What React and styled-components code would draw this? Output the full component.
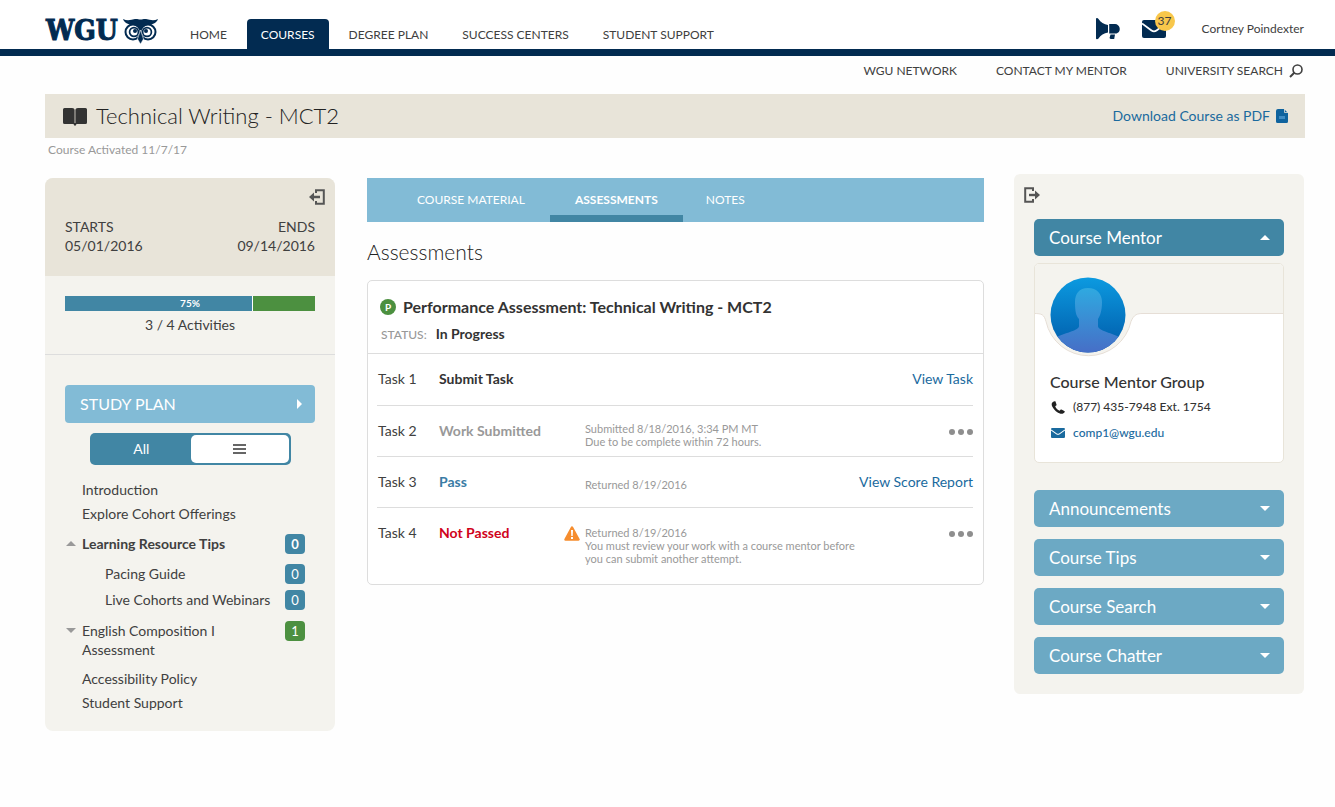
import React, { useState } from 'react';
import styled, { createGlobalStyle } from 'styled-components';

const c = {
  navy: '#022b51',
  ink: '#404040',
  link: '#1a6a9e',
  teal: '#4186a4',
  sky: '#82bbd6',
  blue: '#6ca9c4',
  tan: '#e8e4d9',
  cream: '#f4f3ee',
  green: '#4c9040',
  grey: '#999999',
  line: '#dddddd',
};

const Global = createGlobalStyle`
  * { box-sizing: border-box; }
  body { margin: 0; background: #fefefe; color: ${c.ink}; font: 14px/20px Lato, 'Liberation Sans', sans-serif; }
  a { color: inherit; text-decoration: none; }
  button { font: inherit; color: inherit; border: 0; padding: 0; background: none; cursor: pointer; }
  h1, h2, h3, p, ul { margin: 0; padding: 0; font-weight: inherit; }
  ul { list-style: none; }
  svg { display: block; flex: none; }
`;

const Header = styled.header`
  display: flex;
  align-items: flex-end;
  height: 56px;
  padding: 0 31px 0 46px;
  border-bottom: 7px solid ${c.navy};
  background: #fff;
`;
const Logo = styled.a`
  display: flex;
  align-items: center;
  justify-content: space-between;
  width: 112px;
  height: 37px;
  margin-right: 18px;
  color: ${c.navy};
  font: bold 28px/37px 'DejaVu Serif Condensed', 'DejaVu Serif', serif;
  -webkit-text-stroke: 1px ${c.navy};
`;
const Nav = styled.nav`
  display: flex;
  gap: 6px;
`;
const NavLink = styled.a`
  height: 30px;
  padding: 0 14px;
  border-radius: 4px 4px 0 0;
  font-size: 12px;
  line-height: 31px;
  white-space: nowrap;
  color: ${(p) => (p.$active ? '#fff' : c.ink)};
  background: ${(p) => (p.$active ? c.navy : 'transparent')};
`;
const HeaderTools = styled.div`
  display: flex;
  align-items: center;
  height: 40px;
  margin-left: auto;
  color: ${c.navy};
`;
const MailButton = styled.button`
  position: relative;
  margin: 0 36px 0 22px;
`;
const MailCount = styled.span`
  position: absolute;
  top: -9px;
  right: -9px;
  width: 20px;
  height: 20px;
  border-radius: 10px;
  background: #f8c74b;
  color: ${c.ink};
  font-size: 12px;
  line-height: 20px;
`;
const UserName = styled.a`
  color: ${c.ink};
  font-size: 12px;
`;
const SubNav = styled.nav`
  display: flex;
  justify-content: flex-end;
  gap: 39px;
  height: 38px;
  padding: 5px 32px 0;
  font-size: 12px;
  white-space: nowrap;
`;
const SubLink = styled.a`
  display: flex;
  align-items: center;
  gap: 6px;
  height: 20px;
`;

const Page = styled.main`
  padding: 0 30px 40px 45px;
`;
const TitleBar = styled.div`
  display: flex;
  align-items: center;
  height: 44px;
  padding: 0 17px 0 18px;
  background: ${c.tan};
`;
const Title = styled.h1`
  margin-left: 9px;
  font-size: 22px;
  font-weight: 300;
  color: #222;
`;
const Download = styled.a`
  display: flex;
  align-items: center;
  gap: 6px;
  margin-left: auto;
  color: ${c.link};
`;
const Activated = styled.p`
  height: 36px;
  padding: 2px 3px;
  font-size: 12px;
  color: ${c.grey};
`;
const Columns = styled.div`
  display: grid;
  grid-template-columns: 290px minmax(0, 1fr) 290px;
  align-items: start;
  gap: 30px;
  padding-right: 1px;
`;

const SidePanel = styled.aside`
  margin-top: 4px;
  border-radius: 8px;
  background: ${c.cream};
  overflow: hidden;
`;
const Dates = styled.div`
  height: 98px;
  padding: 11px 20px 0;
  background: ${c.tan};
`;
const CollapseLeft = styled.button`
  display: block;
  margin: 0 -10px 0 auto;
`;
const DateRow = styled.div`
  display: flex;
  justify-content: space-between;
  margin-top: 12px;
  line-height: 19px;
`;
const DateBlock = styled.div`
  text-align: ${(p) => p.$align};
`;
const Progress = styled.div`
  height: 79px;
  padding: 20px 20px 0;
  border-bottom: 1px solid ${c.line};
  text-align: center;
`;
const Bar = styled.div`
  display: grid;
  height: 15px;
  margin-bottom: 4px;
  background: ${c.green};
`;
const BarFill = styled.div`
  grid-area: 1 / 1;
  border-right: 1px solid #fff;
  background: ${c.teal};
`;
const BarLabel = styled.span`
  grid-area: 1 / 1;
  font-size: 10px;
  font-weight: bold;
  line-height: 15px;
  color: #fff;
`;
const Plan = styled.div`
  padding: 30px 20px 16px;
`;
const StudyPlan = styled.button`
  display: flex;
  align-items: center;
  justify-content: space-between;
  width: 100%;
  height: 38px;
  padding: 0 13px 0 15px;
  border-radius: 4px;
  background: ${c.sky};
  color: #fff;
  font-size: 16px;
`;
const Toggle = styled.div`
  display: flex;
  height: 32px;
  margin: 10px 24px 13px 25px;
  padding: 2px;
  border-radius: 5px;
  background: ${c.teal};
`;
const ToggleOption = styled.button`
  display: flex;
  flex: 1;
  align-items: center;
  justify-content: center;
  border-radius: 5px;
  color: #fff;
  background: ${(p) => (p.$on ? '#fff' : 'transparent')};
`;
const PlanRow = styled.li`
  display: flex;
  align-items: flex-start;
  min-height: 24px;
  padding: 2px 10px 2px ${(p) => (p.$nested ? 40 : 0)}px;
  margin-top: ${(p) => p.$space || 0}px;
  font-weight: ${(p) => (p.$bold ? 'bold' : 'normal')};
  line-height: 19px;
`;
const Arrow = styled.span`
  width: 17px;
  padding: 7px 1px;
  color: #999;
`;
const PlanLink = styled.a`
  flex: 1;
  max-width: 170px;
`;
const Count = styled.span`
  width: 20px;
  height: 20px;
  margin-left: auto;
  border-radius: 4px;
  background: ${(p) => (p.$green ? c.green : c.teal)};
  color: #fff;
  font-size: 13px;
  line-height: 20px;
  text-align: center;
`;

const Content = styled.section`
  margin-top: 4px;
  padding-left: 2px;
`;
const Tabs = styled.nav`
  display: flex;
  height: 44px;
  padding-left: 25px;
  background: ${c.sky};
`;
const Tab = styled.a`
  padding: 0 ${(p) => (p.$last ? 23 : 25)}px;
  border-bottom: ${(p) => (p.$active ? `7px solid ${c.teal}` : '0')};
  color: #fff;
  font-size: 12px;
  font-weight: ${(p) => (p.$active ? 'bold' : 'normal')};
  line-height: 44px;
`;
const Heading = styled.h2`
  margin: 16px 0 14px;
  font-size: 21px;
  font-weight: 300;
  line-height: 28px;
  color: #222;
`;
const Card = styled.article`
  padding-bottom: 12px;
  border: 1px solid ${c.line};
  border-radius: 5px;
  background: #fff;
`;
const CardHead = styled.header`
  height: 73px;
  padding: 15px 12px 0;
  border-bottom: 1px solid ${c.line};
`;
const CardTitle = styled.h3`
  display: flex;
  align-items: center;
  gap: 7px;
  font-size: 16px;
  font-weight: 700;
  line-height: 22px;
  color: #333;
`;
const Mark = styled.span`
  width: 16px;
  height: 16px;
  border-radius: 8px;
  background: ${c.green};
  color: #fff;
  font-size: 10px;
  font-weight: bold;
  line-height: 16px;
  text-align: center;
`;
const Status = styled.p`
  display: flex;
  align-items: baseline;
  gap: 9px;
  margin-top: 6px;
  padding-left: 1px;
  font-weight: bold;
  color: #333;
`;
const StatusLabel = styled.span`
  font-size: 12px;
  font-weight: 500;
  color: ${c.grey};
`;
const Tasks = styled.table`
  width: calc(100% - 19px);
  margin: 0 10px 0 9px;
  border-collapse: collapse;
`;
const TaskRow = styled.tr`
  height: 51px;
  &:not(:last-child) { border-bottom: 1px solid ${c.line}; }
`;
const Cell = styled.td`
  padding: 15px 0 0 ${(p) => (p.$first ? 1 : 0)}px;
  width: ${(p) => p.$width || 'auto'};
  vertical-align: top;
  text-align: ${(p) => p.$align || 'left'};
  white-space: nowrap;
  font-weight: ${(p) => (p.$bold ? 'bold' : 'normal')};
  color: ${(p) => p.$color || c.ink};
  > svg, > button { display: inline-block; vertical-align: middle; }
`;
const NoteCell = styled.td`
  padding: ${(p) => p.$top}px 0 7px;
  vertical-align: top;
  font-size: 11px;
  line-height: 13px;
  color: ${c.grey};
`;
const Note = styled.p`
  max-width: 280px;
`;

const RightPanel = styled.aside`
  padding: 13px 20px 20px;
  border-radius: 6px;
  background: ${c.cream};
`;
const CollapseRight = styled.button`
  display: block;
  margin: 0 0 16px -10px;
`;
const Fold = styled.button`
  display: flex;
  align-items: center;
  justify-content: space-between;
  width: 100%;
  height: 37px;
  padding: 0 14px 0 15px;
  margin-bottom: ${(p) => (p.$open ? 7 : 0)}px;
  border-radius: 5px;
  background: ${(p) => (p.$open ? c.teal : c.blue)};
  color: #fff;
  font-size: 17px;
`;
const FoldList = styled.div`
  display: grid;
  gap: 12px;
`;
const Mentor = styled.div`
  height: 200px;
  margin-bottom: 27px;
  border: 1px solid ${c.tan};
  border-radius: 5px;
  background: #fff;
  overflow: hidden;
  color: #333;
`;
const MentorName = styled.h3`
  padding: 6px 15px 1px;
  font-size: 16px;
  font-weight: 500;
  line-height: 22px;
`;
const Contact = styled.a`
  display: flex;
  align-items: center;
  gap: 8px;
  height: 26px;
  padding-left: 16px;
  font-size: 12px;
  font-weight: 500;
  color: ${(p) => (p.$link ? c.link : '#333')};
`;

const Owl = () => (
  <svg width="35" height="26" viewBox="0 0 35 26">
    <path fill={c.navy} d="M0 1c4 2 8 1 12 0 2-.4 3.500 .5 5.500 .5S21 .6 23 1c4 1 8 2 12 0-1.500 4-5 5.500-9 5.500-4 0-6 2-8.500 5C15 8.500 13 6.500 9 6.500S1.500 5 0 1z" />
    <path fill={c.navy} d="M9 4h17l-4 6-1 9-3.500 7-3.500-7-1-9z" />
    <g fill="#fff" stroke={c.navy} strokeWidth="2">
      <circle cx="10" cy="14" r="7.500" />
      <circle cx="25" cy="14" r="7.500" />
    </g>
    <g fill="#fff" stroke={c.navy} strokeWidth="1.700">
      <circle cx="11" cy="14" r="4.400" />
      <circle cx="24" cy="14" r="4.400" />
    </g>
    <path fill={c.navy} d="M8 2h19l-3 5c-3 0-5 2-6.500 5C16 9 14 7 11 7z" />
    <circle cx="12" cy="13" r="2" fill={c.navy} />
    <circle cx="23" cy="13" r="2" fill={c.navy} />
    <path fill={c.navy} stroke="#fff" strokeWidth=".6" d="M17.500 12l3 9-3 5-3-5z" />
  </svg>
);
const Megaphone = () => (
  <svg width="24" height="22" viewBox="0 0 24 22" fill={c.navy}>
    <path d="M0 .8C0-.2 1.800-.2 2.500 1 4.500 4 8 6.500 12 7v7.500C8 15 4.500 17.500 2.500 20.500c-.7 1-2.500 1-2.500 0z" />
    <path d="M13 6h6c2.500 0 4 2 4.500 3.500.8 3-.5 5-3 6H13zM14.500 16.500h4.500l-.8 4.500h-3.400c-1 0-1.500-1-1-2z" />
    <path d="M12 6v10h1.200V6z" fill="#fff" />
  </svg>
);
const Envelope = ({ width, height, fill }) => (
  <svg width={width} height={height} viewBox="0 0 24 18" preserveAspectRatio="none">
    <rect width="24" height="18" rx="2" fill={fill} />
    <path d="M0 3.500l9.500 7c1.700 1.200 3.300 1.200 5 0l9.500-7" fill="none" stroke="#fff" strokeWidth="1.800" />
  </svg>
);
const Magnifier = () => (
  <svg width="14" height="14" viewBox="0 0 14 14" fill="none" stroke={c.ink}>
    <circle cx="8.500" cy="5.500" r="4.500" strokeWidth="1.600" />
    <path d="M5.500 8.500L1 13" strokeWidth="2" />
  </svg>
);
const Book = () => (
  <svg width="24" height="19" viewBox="0 0 24 19" fill="#333">
    <path d="M1.500 1H9c1.500 0 2.600.7 2.600 2v15c-.6-.8-1.400-1-2.600-1H1.500A1.500 1.500 0 0 1 0 15.500v-13A1.500 1.500 0 0 1 1.500 1zM22.500 1H15c-1.500 0-2.600.7-2.600 2v15c.6-.8 1.400-1 2.600-1h7.500a1.500 1.500 0 0 0 1.500-1.500v-13A1.500 1.500 0 0 0 22.500 1z" />
    <path d="M11 16h2v2.500h-2z" />
  </svg>
);
const PdfFile = () => (
  <svg width="12" height="14" viewBox="0 0 12 14">
    <path d="M2 0h6l4 4v8.500a1.500 1.500 0 0 1-1.500 1.500h-9A1.500 1.500 0 0 1 0 12.500V2a2 2 0 0 1 2-2z" fill="#0f639e" />
    <path d="M8.500 0v3.500H12" fill="none" stroke={c.tan} strokeWidth=".8" />
    <path d="M3 7h6v3H3z" fill="#3f8cc4" />
  </svg>
);
const Exit = ({ left }) => (
  <svg width="16" height="16" viewBox="0 0 16 16" fill="none" stroke="#555">
    {left ? (
      <>
        <path d="M7 4V1.200h7.800v13.600H7V12" strokeWidth="2" />
        <path d="M11 8H4" strokeWidth="2.400" />
        <path d="M0 8l5-4.500v9z" fill="#555" stroke="none" />
      </>
    ) : (
      <>
        <path d="M9 4V1.200H1.200v13.600H9V12" strokeWidth="2" />
        <path d="M5 8h7" strokeWidth="2.400" />
        <path d="M16 8l-5-4.500v9z" fill="#555" stroke="none" />
      </>
    )}
  </svg>
);
const Triangle = ({ dir, width = 10, height = 5 }) => {
  const d = { up: 'M0 10L5 0l5 10z', down: 'M0 0h10L5 10z', right: 'M0 0l10 5-10 5z' }[dir];
  return (
    <svg width={width} height={height} viewBox="0 0 10 10" preserveAspectRatio="none" fill="currentColor">
      <path d={d} />
    </svg>
  );
};
const Lines = () => (
  <svg width="13" height="10" viewBox="0 0 13 10" fill="#666">
    <path d="M0 0h13v2H0zM0 4h13v2H0zM0 8h13v2H0z" />
  </svg>
);
const Warning = () => (
  <svg width="16" height="15" viewBox="0 0 16 15">
    <path d="M8 1.500L14.500 13.500h-13z" fill="#f68d2e" stroke="#f68d2e" strokeWidth="2.500" strokeLinejoin="round" />
    <path d="M7 4h2l-.3 6H7.300zM7 11h2v2H7z" fill="#fff" />
  </svg>
);
const Dots = () => (
  <svg width="24" height="6" viewBox="0 0 24 6" fill="#8e8e8e">
    <circle cx="3" cy="3" r="3" />
    <circle cx="12" cy="3" r="3" />
    <circle cx="21" cy="3" r="3" />
  </svg>
);
const Phone = () => (
  <svg width="14" height="13" viewBox="0 0 14 13" fill="#222">
    <path d="M3.500 .3c-3 1-3.500 3-2 5.700 1.800 3.200 4.500 5.800 8 6.700 2 .4 3.500-.4 4.200-1.700.2-.4 0-.8-.4-1L10.500 8.600c-.4-.2-.8-.1-1 .2l-.8 1C6.500 8.800 5 7.300 4.200 5.300l1-.7c.4-.3.4-.6.300-1L4.500.6C4.300.3 4 .1 3.500.3z" />
  </svg>
);
const Portrait = () => (
  <svg width="248" height="101" viewBox="0 0 248 101">
    <defs>
      <linearGradient id="disc" x1="0" y1="0" x2="0" y2="1">
        <stop offset="0" stopColor="#0c9ae0" />
        <stop offset="1" stopColor="#0059a8" />
      </linearGradient>
      <linearGradient id="person" x1="0" y1="0" x2="0" y2="1">
        <stop offset="0" stopColor="#2fa9e0" />
        <stop offset="1" stopColor="#476dc6" />
      </linearGradient>
      <clipPath id="round"><circle cx="53" cy="51" r="37.500" /></clipPath>
    </defs>
    <path d="M-1-1h250v50.500H108c-6 0-9 1-12 8a43.500 43.500 0 0 1-85 0c-2-7-4-8-12-8z" fill={c.cream} stroke="#e6ded6" />
    <circle cx="53" cy="51" r="37.500" fill="url(#disc)" />
    <path clipPath="url(#round)" fill="url(#person)" d="M53 24c9 0 14 6 14 14 0 9-2 14-4 17v7c0 5 15 7 23 12v16H20V74c8-5 24-7 24-12v-7c-3-3-4-8-4-17 0-8 4-14 13-14z" />
  </svg>
);

const navItems = ['HOME', 'COURSES', 'DEGREE PLAN', 'SUCCESS CENTERS', 'STUDENT SUPPORT'];
const tasks = [
  { name: 'Task 1', status: 'Submit Task', color: '#333333', link: 'View Task' },
  { name: 'Task 2', status: 'Work Submitted', color: c.grey, notes: ['Submitted 8/18/2016, 3:34 PM MT', 'Due to be complete within 72 hours.'] },
  { name: 'Task 3', status: 'Pass', color: '#3a7ca5', notes: ['Returned 8/19/2016'], noteTop: 21, link: 'View Score Report' },
  { name: 'Task 4', status: 'Not Passed', color: '#d0021b', warn: true, noteTop: 18, notes: ['Returned 8/19/2016', 'You must review your work with a course mentor before you can submit another attempt.'] },
];
const folds = ['Announcements', 'Course Tips', 'Course Search', 'Course Chatter'];

export default function App() {
  const [view, setView] = useState('list');
  return (
    <>
      <Global />
      <Header>
        <Logo href="#">WGU<Owl /></Logo>
        <Nav>
          {navItems.map((n) => (
            <NavLink key={n} href="#" $active={n === 'COURSES'}>{n}</NavLink>
          ))}
        </Nav>
        <HeaderTools>
          <button aria-label="Announcements"><Megaphone /></button>
          <MailButton aria-label="Messages">
            <Envelope width={24} height={18} fill={c.navy} />
            <MailCount>37</MailCount>
          </MailButton>
          <UserName href="#">Cortney Poindexter</UserName>
        </HeaderTools>
      </Header>
      <SubNav>
        <SubLink href="#">WGU NETWORK</SubLink>
        <SubLink href="#">CONTACT MY MENTOR</SubLink>
        <SubLink href="#">UNIVERSITY SEARCH <Magnifier /></SubLink>
      </SubNav>
      <Page>
        <TitleBar>
          <Book />
          <Title>Technical Writing - MCT2</Title>
          <Download href="#">Download Course as PDF <PdfFile /></Download>
        </TitleBar>
        <Activated>Course Activated 11/7/17</Activated>
        <Columns>
          <SidePanel>
            <Dates>
              <CollapseLeft aria-label="Collapse left panel"><Exit left /></CollapseLeft>
              <DateRow>
                <DateBlock $align="left">STARTS<br />05/01/2016</DateBlock>
                <DateBlock $align="right">ENDS<br />09/14/2016</DateBlock>
              </DateRow>
            </Dates>
            <Progress>
              <Bar>
                <BarFill style={{ width: '75%' }} />
                <BarLabel>75%</BarLabel>
              </Bar>
              3 / 4 Activities
            </Progress>
            <Plan>
              <StudyPlan>STUDY PLAN <Triangle dir="right" width={5} height={10} /></StudyPlan>
              <Toggle>
                <ToggleOption $on={view === 'all'} onClick={() => setView('all')}>All</ToggleOption>
                <ToggleOption aria-label="List" $on={view === 'list'} onClick={() => setView('list')}><Lines /></ToggleOption>
              </Toggle>
              <ul>
                <PlanRow><Arrow /><PlanLink href="#">Introduction</PlanLink></PlanRow>
                <PlanRow><Arrow /><PlanLink href="#">Explore Cohort Offerings</PlanLink></PlanRow>
                <PlanRow $bold $space={6}><Arrow><Triangle dir="up" /></Arrow><PlanLink href="#">Learning Resource Tips</PlanLink><Count>0</Count></PlanRow>
                <PlanRow $nested $space={6}><PlanLink href="#">Pacing Guide</PlanLink><Count>0</Count></PlanRow>
                <PlanRow $nested $space={2}><PlanLink href="#">Live Cohorts and Webinars</PlanLink><Count>0</Count></PlanRow>
                <PlanRow $space={7}><Arrow><Triangle dir="down" /></Arrow><PlanLink href="#">English Composition I<br />Assessment</PlanLink><Count $green>1</Count></PlanRow>
                <PlanRow $space={6}><Arrow /><PlanLink href="#">Accessibility Policy</PlanLink></PlanRow>
                <PlanRow><Arrow /><PlanLink href="#">Student Support</PlanLink></PlanRow>
              </ul>
            </Plan>
          </SidePanel>

          <Content>
            <Tabs>
              <Tab href="#">COURSE MATERIAL</Tab>
              <Tab href="#" $active>ASSESSMENTS</Tab>
              <Tab href="#" $last>NOTES</Tab>
            </Tabs>
            <Heading>Assessments</Heading>
            <Card>
              <CardHead>
                <CardTitle><Mark>P</Mark>Performance Assessment: Technical Writing - MCT2</CardTitle>
                <Status><StatusLabel>STATUS:</StatusLabel>In Progress</Status>
              </CardHead>
              <Tasks>
                <tbody>
                  {tasks.map((t) => (
                    <TaskRow key={t.name}>
                      <Cell $first $width="62px">{t.name}</Cell>
                      <Cell $bold $width="125px" $color={t.color}>{t.status}</Cell>
                      <Cell $width="21px">{t.warn && <Warning />}</Cell>
                      <NoteCell $top={t.noteTop || 16}>
                        {t.notes?.map((n) => <Note key={n}>{n}</Note>)}
                      </NoteCell>
                      <Cell $align="right" $color={c.link}>
                        {t.link ? <a href="#">{t.link}</a> : <button aria-label="More options"><Dots /></button>}
                      </Cell>
                    </TaskRow>
                  ))}
                </tbody>
              </Tasks>
            </Card>
          </Content>

          <RightPanel>
            <CollapseRight aria-label="Collapse right panel"><Exit /></CollapseRight>
            <Fold $open aria-expanded="true">Course Mentor <Triangle dir="up" /></Fold>
            <Mentor>
              <Portrait />
              <MentorName>Course Mentor Group</MentorName>
              <Contact href="tel:8774357948"><Phone /> (877) 435-7948 Ext. 1754</Contact>
              <Contact $link href="mailto:comp1@wgu.edu"><Envelope width={14} height={10} fill={c.link} /> comp1@wgu.edu</Contact>
            </Mentor>
            <FoldList>
              {folds.map((f) => (
                <Fold key={f} aria-expanded="false">{f} <Triangle dir="down" /></Fold>
              ))}
            </FoldList>
          </RightPanel>
        </Columns>
      </Page>
    </>
  );
}
